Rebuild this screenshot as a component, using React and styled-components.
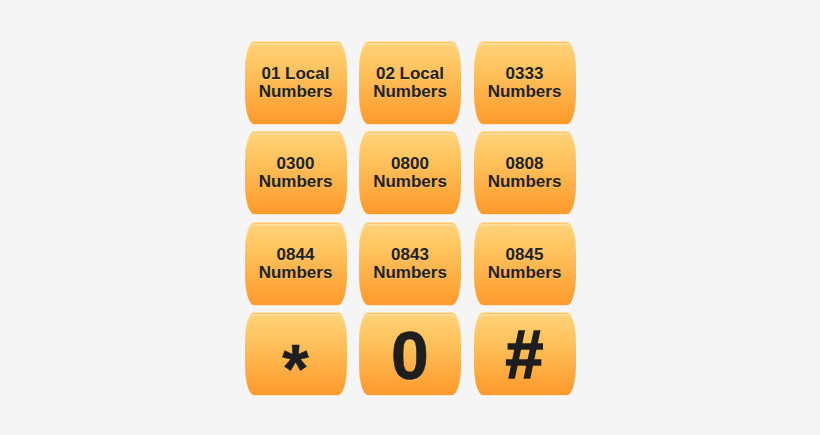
import React from 'react';
import styled, { createGlobalStyle } from 'styled-components';

const GlobalStyle = createGlobalStyle`
  html, body {
    margin: 0;
    padding: 0;
    background: #f5f5f5;
  }
  body {
    font-family: "Liberation Sans", Arial, sans-serif;
  }
`

const Page = styled.div`
  width: 820px;
  height: 435px;
  display: flex;
  justify-content: center;
  padding-top: 41px;
  box-sizing: border-box;
`

const Pad = styled.div`
  display: grid;
  grid-template-columns: repeat(3, 102px);
  grid-auto-rows: 83px;
  column-gap: 12.5px;
  row-gap: 7.3px;
  align-content: start;
`

const Key = styled.div`
  display: flex;
  align-items: center;
  justify-content: center;
  text-align: center;
  border-radius: 9px / 30px;
  background: linear-gradient(to bottom, #ffd27a 0%, #ffc560 30%, #ffac42 70%, #ff9a2c 100%);
  border-top: 1px solid #ffe2a8;
  box-shadow:
    inset 0 1px 0 #ffc46a,
    inset 0 3px 0 #ffdc98,
    0 1px 0 #fbe6cc;
  box-sizing: border-box;
  color: #222;
  font-weight: 700;
  font-size: 17px;
  line-height: 18px;
  text-shadow: 0 1px 0 rgba(255, 235, 190, 0.35);
`

const Label = styled.div`
  transform: translateY(-0.5px);
`

const Glyph = styled.span`
  font-size: ${props => props.size}px;
  line-height: 1;
  transform: translateY(${props => props.shift}px);
  color: #1e1e1e;
  -webkit-text-stroke: ${props => props.stroke}px #1e1e1e;
`

const keys = [
  ['01 Local', 'Numbers'],
  ['02 Local', 'Numbers'],
  ['0333', 'Numbers'],
  ['0300', 'Numbers'],
  ['0800', 'Numbers'],
  ['0808', 'Numbers'],
  ['0844', 'Numbers'],
  ['0843', 'Numbers'],
  ['0845', 'Numbers'],
]

const symbols = [
  { label: '*', size: 68, shift: 14, stroke: 0.5 },
  { label: '0', size: 68, shift: 1, stroke: 0.6 },
  { label: '#', size: 68, shift: 0, stroke: 1.6 },
]

export default function App() {
  return (
    <Page>
      <GlobalStyle />
      <Pad>
        {keys.map(([top, bottom], i) => (
          <Key key={`k-${i}`}>
            <Label>
              {top}
              <br />
              {bottom}
            </Label>
          </Key>
        ))}
        {symbols.map(s => (
          <Key key={s.label}>
            <Glyph size={s.size} shift={s.shift} stroke={s.stroke}>{s.label}</Glyph>
          </Key>
        ))}
      </Pad>
    </Page>
  )
}
